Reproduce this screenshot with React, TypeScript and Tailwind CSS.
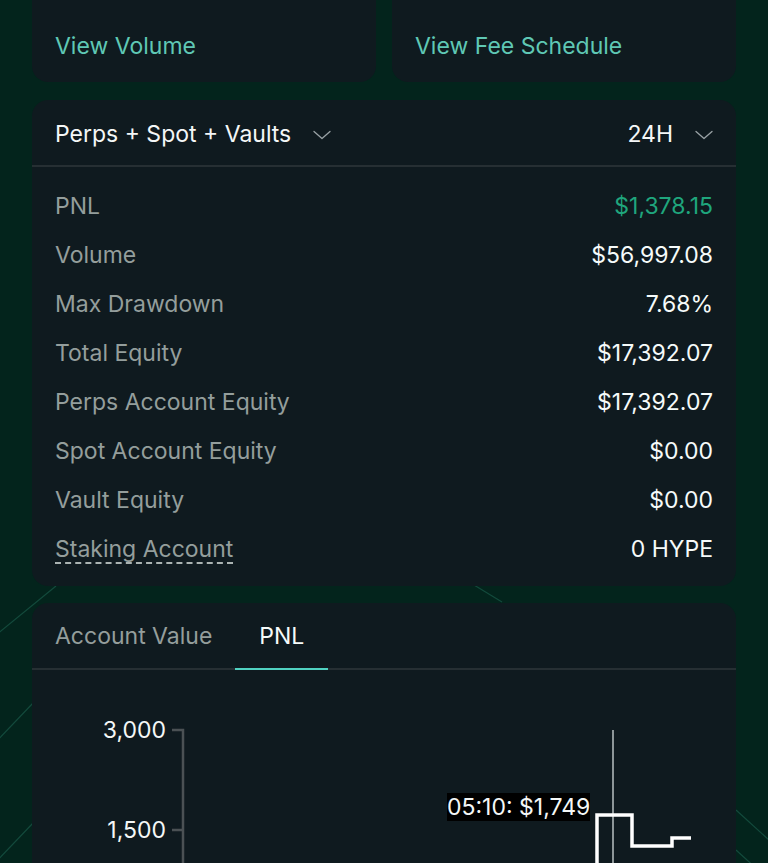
import React, { useState } from 'react';

const rows: { label: string; value: string; tone?: 'green'; dashed?: boolean }[] = [
  { label: 'PNL', value: '$1,378.15', tone: 'green' },
  { label: 'Volume', value: '$56,997.08' },
  { label: 'Max Drawdown', value: '7.68%' },
  { label: 'Total Equity', value: '$17,392.07' },
  { label: 'Perps Account Equity', value: '$17,392.07' },
  { label: 'Spot Account Equity', value: '$0.00' },
  { label: 'Vault Equity', value: '$0.00' },
  { label: 'Staking Account', value: '0 HYPE', dashed: true },
];

const Chevron = () => (
  <svg width="18" height="10" viewBox="0 0 18 10" fill="none" className="text-[#9aa3a6]">
    <path d="M1 1.5 L9 8.5 L17 1.5" stroke="currentColor" strokeWidth="1.3" strokeLinecap="round" strokeLinejoin="round" />
  </svg>
);

const Backdrop = () => (
  <svg className="absolute inset-0 w-full h-full pointer-events-none" viewBox="0 0 768 863" preserveAspectRatio="none">
    <g stroke="#134a3c" strokeWidth="1.2" fill="none">
      <line x1="56" y1="586" x2="-10" y2="640" />
      <line x1="34" y1="702" x2="-10" y2="748" />
      <line x1="34" y1="822" x2="-10" y2="868" />
      <line x1="474" y1="585" x2="502" y2="602" />
      <line x1="736" y1="810" x2="780" y2="850" />
      <line x1="736" y1="850" x2="780" y2="890" />
    </g>
  </svg>
);

const Chart = () => (
  <div className="relative h-[200px]">
    <svg width="704" height="200" viewBox="0 0 704 200" className="block">
      <g fontFamily="Inter, 'Noto Sans', sans-serif" fontSize="23" fill="#f4f7f7" textAnchor="end">
        <text x="134" y="68">3,000</text>
        <text x="134" y="168">1,500</text>
      </g>
      <path d="M140 60 H151 V200 M140 160 H151" stroke="#4b5154" strokeWidth="2.5" fill="none" />
      <line x1="581" y1="60" x2="581" y2="200" stroke="#b9c0c2" strokeWidth="1.5" />
      <path d="M565 200 V145 H600 V176 H640 V168 H659" stroke="#ffffff" strokeWidth="3.5" fill="none" strokeLinejoin="miter" />
    </svg>
    <div className="absolute left-[415px] top-[123px] h-[28px] bg-black text-[23px] leading-[28px] text-[#f4f7f7]">
      05:10: $1,749
    </div>
  </div>
);

export default function App() {
  const [tab, setTab] = useState<'value' | 'pnl'>('pnl');

  return (
    <div
      className="relative h-[863px] overflow-hidden bg-[#03241c] px-8"
      style={{ fontFamily: "Inter, 'Noto Sans', sans-serif" }}
    >
      <Backdrop />
      <div className="relative flex flex-col gap-[18px]">
        <div className="grid grid-cols-2 gap-4">
          <div className="h-[82px] rounded-b-2xl bg-[#0f1a1f] px-[23px] pt-[31px] text-[23px] leading-[30px] text-[#5fc8b5]">
            View Volume
          </div>
          <div className="h-[82px] rounded-b-2xl bg-[#0f1a1f] px-[23px] pt-[31px] text-[23px] leading-[30px] text-[#5fc8b5]">
            View Fee Schedule
          </div>
        </div>

        <div className="rounded-2xl bg-[#0f1a1f] pb-3">
          <div className="flex h-[67px] items-center justify-between border-b-2 border-[#262f33] px-[23px] pt-1 text-[23px] text-[#f4f7f7]">
            <div className="flex items-center gap-[22px]">
              <span>Perps + Spot + Vaults</span>
              <Chevron />
            </div>
            <div className="flex items-center gap-[22px]">
              <span>24H</span>
              <Chevron />
            </div>
          </div>
          <div className="flex flex-col px-[23px] pt-[15px]">
            {rows.map((r) => (
              <div key={r.label} className="flex h-[49px] items-center justify-between text-[23px]">
                <span
                  className={
                    r.dashed
                      ? 'border-b-2 border-dashed border-[#aab3b2] leading-[26px] text-[#949e9c]'
                      : 'text-[#949e9c]'
                  }
                >
                  {r.label}
                </span>
                <span className={r.tone === 'green' ? 'text-[#1fa67d]' : 'text-[#f6fbfa]'}>{r.value}</span>
              </div>
            ))}
          </div>
        </div>

        <div className="-mt-px rounded-t-2xl bg-[#0f1a1f]">
          <div className="flex h-[67px] items-stretch border-b-2 border-[#262f33]">
            <button
              onClick={() => setTab('value')}
              className={`-mb-[2px] flex items-center border-b-2 px-[23px] pt-[2px] text-[23px] ${
                tab === 'value' ? 'border-[#50d2c1] text-[#f6fbfa]' : 'border-transparent text-[#949e9c]'
              }`}
            >
              Account Value
            </button>
            <button
              onClick={() => setTab('pnl')}
              className={`-mb-[2px] flex items-center border-b-2 px-6 pt-[2px] text-[23px] ${
                tab === 'pnl' ? 'border-[#50d2c1] text-[#f6fbfa]' : 'border-transparent text-[#949e9c]'
              }`}
            >
              PNL
            </button>
          </div>
          <Chart />
        </div>
      </div>
    </div>
  );
}
